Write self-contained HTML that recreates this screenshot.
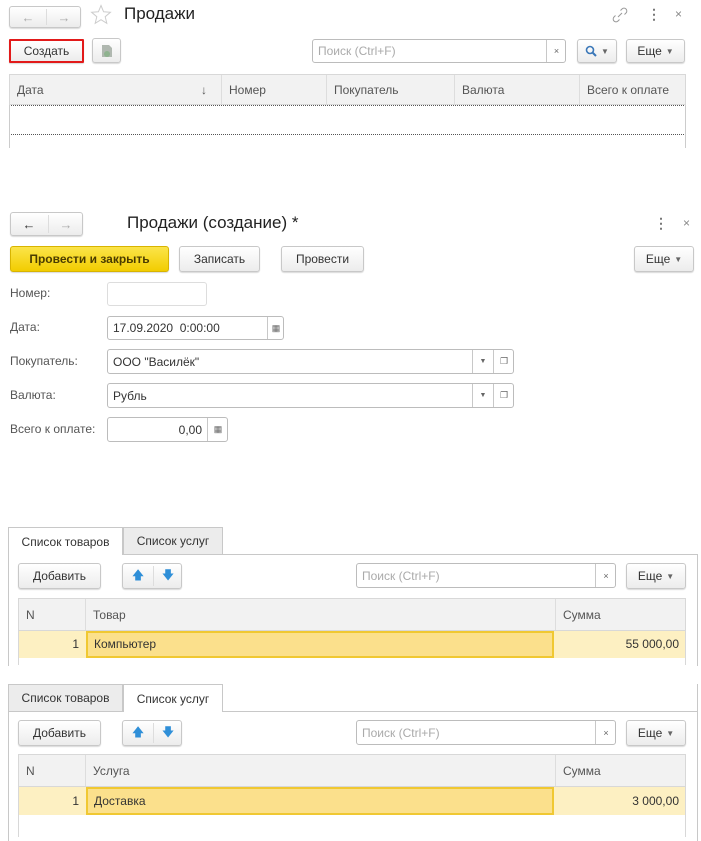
<!DOCTYPE html>
<html><head><meta charset="utf-8"><style>
*{box-sizing:border-box;margin:0;padding:0}
body{width:701px;height:833px;background:#fff;font-family:"Liberation Sans",Arial,sans-serif;font-size:12px;color:#333;position:relative;overflow:hidden}
.a{position:absolute}
.btn{position:absolute;border:1px solid #c8c8c8;border-radius:3px;background:linear-gradient(#fff,#ececec);box-shadow:0 1px 1px rgba(0,0,0,.15);display:flex;align-items:center;justify-content:center;font-size:12px;color:#333}
.inp{position:absolute;border:1px solid #bcbcbc;border-radius:3px;background:#fff;display:flex;align-items:center;padding-left:5px;font-size:12px;color:#333}
.seg{position:absolute;top:0;bottom:0;border-left:1px solid #c8c8c8;display:flex;align-items:center;justify-content:center;font-size:9px;color:#666}
.lbl{position:absolute;font-size:12px;color:#555}
.hdr{position:absolute;background:#f2f2f2;border:1px solid #d8d8d8;height:31px}
.hc{position:absolute;top:0;bottom:0;display:flex;align-items:center;padding-left:7px;border-right:1px solid #ddd;color:#555}
.tab{position:absolute;border:1px solid #c8c8c8;border-bottom:none;display:flex;align-items:center;justify-content:center;font-size:12px;color:#333}
.ttl{position:absolute;font-size:17px;color:#222}
</style></head><body>

<!-- Top window -->
<div class="btn" style="left:9px;top:6px;width:72px;height:22px;padding:0">
 <span style="position:absolute;left:0;width:36px;text-align:center;color:#aaa;font-size:13px">&#8592;</span>
 <span style="position:absolute;left:36px;top:2px;bottom:2px;border-left:1px solid #ddd"></span>
 <span style="position:absolute;left:36px;width:36px;text-align:center;color:#aaa;font-size:13px">&#8594;</span>
</div>
<svg class="a" style="left:90px;top:4px" width="22" height="21" viewBox="0 0 22 21"><path d="M11 1.5l2.6 6.3 6.8.5-5.2 4.4 1.6 6.6L11 15.7l-5.8 3.6 1.6-6.6L1.6 8.3l6.8-.5z" fill="none" stroke="#ccc" stroke-width="1"/></svg>
<div class="ttl" style="left:124px;top:4px">Продажи</div>
<svg class="a" style="left:612px;top:7px" width="16" height="16" viewBox="0 0 16 16"><path d="M6 10l4-4M8.5 3.5l1.5-1.5a2.8 2.8 0 014 4l-1.5 1.5M7.5 12.5L6 14a2.8 2.8 0 01-4-4l1.5-1.5" fill="none" stroke="#999" stroke-width="1"/></svg>
<div class="a" style="left:647px;top:6px;font-size:14px;color:#777;font-weight:bold">&#8942;</div>
<div class="a" style="left:675px;top:7px;font-size:12px;color:#888">&#215;</div>

<div class="btn" style="left:9px;top:39px;width:75px;height:24px;border:2px solid #e21a1a;border-radius:1px">Создать</div>
<div class="btn" style="left:92px;top:38px;width:29px;height:25px"><svg width="12" height="14" viewBox="0 0 12 14"><path d="M1 1h7l3 3v9H1z" fill="#b0b8b0"/><circle cx="6" cy="10" r="3" fill="#8fb38f"/></svg></div>
<div class="inp" style="left:312px;top:39px;width:254px;height:24px;color:#aaa">Поиск (Ctrl+F)<div class="seg" style="left:233px;width:20px">&#215;</div></div>
<div class="btn" style="left:577px;top:39px;width:40px;height:24px"><svg width="12" height="12" viewBox="0 0 12 12"><circle cx="5" cy="5" r="3.5" fill="none" stroke="#3a77b8" stroke-width="1.6"/><path d="M7.5 7.5L11 11" stroke="#3a77b8" stroke-width="2"/></svg><span style="color:#666;font-size:8px;margin-left:4px">&#9660;</span></div>
<div class="btn" style="left:626px;top:39px;width:59px;height:24px">Еще <span style="font-size:8px;color:#666;margin-left:4px">&#9660;</span></div>

<div class="hdr" style="left:9px;top:74px;width:677px">
 <div class="hc" style="left:0;width:212px">Дата<span style="position:absolute;right:14px">&#8595;</span></div>
 <div class="hc" style="left:212px;width:105px">Номер</div>
 <div class="hc" style="left:317px;width:128px">Покупатель</div>
 <div class="hc" style="left:445px;width:125px">Валюта</div>
 <div class="hc" style="left:570px;width:106px;border-right:none">Всего к оплате</div>
</div>
<div class="a" style="left:9px;top:105px;width:677px;height:30px;border:1px dotted #555"></div>
<div class="a" style="left:9px;top:105px;width:1px;height:43px;background:#ccc"></div>
<div class="a" style="left:685px;top:105px;width:1px;height:43px;background:#ccc"></div>

<!-- Second window -->
<div class="btn" style="left:10px;top:212px;width:73px;height:24px">
 <span style="position:absolute;left:0;width:36px;text-align:center;color:#333;font-size:13px">&#8592;</span>
 <span style="position:absolute;left:37px;top:2px;bottom:2px;border-left:1px solid #ddd"></span>
 <span style="position:absolute;left:37px;width:36px;text-align:center;color:#aaa;font-size:13px">&#8594;</span>
</div>
<div class="ttl" style="left:127px;top:213px">Продажи (создание) *</div>
<div class="a" style="left:654px;top:215px;font-size:14px;color:#777;font-weight:bold">&#8942;</div>
<div class="a" style="left:683px;top:216px;font-size:12px;color:#888">&#215;</div>

<div class="btn" style="left:10px;top:246px;width:159px;height:26px;background:linear-gradient(#fbe44a,#f2cd00);border-color:#d8b400;font-weight:bold;color:#4a3c00">Провести и закрыть</div>
<div class="btn" style="left:179px;top:246px;width:81px;height:26px">Записать</div>
<div class="btn" style="left:281px;top:246px;width:83px;height:26px">Провести</div>
<div class="btn" style="left:634px;top:246px;width:60px;height:26px">Еще <span style="font-size:8px;color:#666;margin-left:4px">&#9660;</span></div>

<div class="lbl" style="left:10px;top:286px">Номер:</div>
<div class="inp" style="left:107px;top:282px;width:100px;height:24px;border-color:#ddd"></div>
<div class="lbl" style="left:10px;top:320px">Дата:</div>
<div class="inp" style="left:107px;top:316px;width:177px;height:24px">17.09.2020&nbsp; 0:00:00<div class="seg" style="left:159px;width:17px">&#9638;</div></div>
<div class="lbl" style="left:10px;top:354px">Покупатель:</div>
<div class="inp" style="left:107px;top:349px;width:407px;height:25px">ООО "Василёк"<div class="seg" style="left:364px;width:21px;font-size:7px">&#9660;</div><div class="seg" style="left:385px;width:21px">&#10064;</div></div>
<div class="lbl" style="left:10px;top:388px">Валюта:</div>
<div class="inp" style="left:107px;top:383px;width:407px;height:25px">Рубль<div class="seg" style="left:364px;width:21px;font-size:7px">&#9660;</div><div class="seg" style="left:385px;width:21px">&#10064;</div></div>
<div class="lbl" style="left:10px;top:422px">Всего к оплате:</div>
<div class="inp" style="left:107px;top:417px;width:121px;height:25px;justify-content:flex-end;padding-right:25px">0,00<div class="seg" style="left:99px;width:21px">&#9638;</div></div>

<!-- Tabs 1 -->
<div class="a" style="left:8px;top:554px;width:690px;height:160px;border:1px solid #c8c8c8;border-bottom:none"></div>
<div class="tab" style="left:8px;top:527px;width:115px;height:28px;background:#fff">Список товаров</div>
<div class="tab" style="left:123px;top:527px;width:100px;height:27px;background:#ececec">Список услуг</div>
<div class="btn" style="left:18px;top:563px;width:83px;height:26px">Добавить</div>
<div class="btn" style="left:122px;top:563px;width:60px;height:26px;padding:0">
 <span style="position:absolute;left:0;width:30px;text-align:center;color:#2f8fd8;font-size:12px">&#129093;</span>
 <span style="position:absolute;left:30px;top:2px;bottom:2px;border-left:1px solid #ddd"></span>
 <span style="position:absolute;left:30px;width:30px;text-align:center;color:#2f8fd8;font-size:12px">&#129095;</span>
</div>
<div class="inp" style="left:356px;top:563px;width:260px;height:25px;color:#aaa">Поиск (Ctrl+F)<div class="seg" style="left:238px;width:21px">&#215;</div></div>
<div class="btn" style="left:626px;top:563px;width:60px;height:26px">Еще <span style="font-size:8px;color:#666;margin-left:4px">&#9660;</span></div>
<div class="hdr" style="left:18px;top:598px;width:668px;height:33px">
 <div class="hc" style="left:0;width:67px">N</div>
 <div class="hc" style="left:67px;width:470px">Товар</div>
 <div class="hc" style="left:537px;width:130px;border-right:none">Сумма</div>
</div>
<div class="a" style="left:18px;top:631px;width:668px;height:27px;background:#fdf0c2"></div>
<div class="a" style="left:18px;top:631px;width:61px;height:27px;text-align:right;line-height:27px">1</div>
<div class="a" style="left:86px;top:631px;width:468px;height:27px;background:#fbe08c;border:2px solid #f0c832;line-height:23px;padding-left:6px">Компьютер</div>
<div class="a" style="left:555px;top:631px;width:124px;height:27px;text-align:right;line-height:27px">55 000,00</div>
<div class="a" style="left:18px;top:631px;width:1px;height:34px;background:#d8d8d8"></div>
<div class="a" style="left:685px;top:631px;width:1px;height:34px;background:#d8d8d8"></div>
<div class="a" style="left:0;top:666px;width:701px;height:18px;background:#fff"></div>

<!-- Tabs 2 -->
<div class="a" style="left:8px;top:711px;width:690px;height:130px;border:1px solid #c8c8c8;border-bottom:none"></div>
<div class="tab" style="left:8px;top:684px;width:115px;height:27px;background:#ececec">Список товаров</div>
<div class="tab" style="left:123px;top:684px;width:100px;height:28px;background:#fff">Список услуг</div>
<div class="btn" style="left:18px;top:720px;width:83px;height:26px">Добавить</div>
<div class="btn" style="left:122px;top:720px;width:60px;height:26px;padding:0">
 <span style="position:absolute;left:0;width:30px;text-align:center;color:#2f8fd8;font-size:12px">&#129093;</span>
 <span style="position:absolute;left:30px;top:2px;bottom:2px;border-left:1px solid #ddd"></span>
 <span style="position:absolute;left:30px;width:30px;text-align:center;color:#2f8fd8;font-size:12px">&#129095;</span>
</div>
<div class="inp" style="left:356px;top:720px;width:260px;height:25px;color:#aaa">Поиск (Ctrl+F)<div class="seg" style="left:238px;width:21px">&#215;</div></div>
<div class="btn" style="left:626px;top:720px;width:60px;height:26px">Еще <span style="font-size:8px;color:#666;margin-left:4px">&#9660;</span></div>
<div class="hdr" style="left:18px;top:754px;width:668px;height:33px">
 <div class="hc" style="left:0;width:67px">N</div>
 <div class="hc" style="left:67px;width:470px">Услуга</div>
 <div class="hc" style="left:537px;width:130px;border-right:none">Сумма</div>
</div>
<div class="a" style="left:18px;top:787px;width:668px;height:28px;background:#fdf0c2"></div>
<div class="a" style="left:18px;top:787px;width:61px;height:28px;text-align:right;line-height:28px">1</div>
<div class="a" style="left:86px;top:787px;width:468px;height:28px;background:#fbe08c;border:2px solid #f0c832;line-height:24px;padding-left:6px">Доставка</div>
<div class="a" style="left:555px;top:787px;width:124px;height:28px;text-align:right;line-height:28px">3 000,00</div>
<div class="a" style="left:18px;top:787px;width:1px;height:50px;background:#d8d8d8"></div>
<div class="a" style="left:685px;top:787px;width:1px;height:50px;background:#d8d8d8"></div>

</body></html>
